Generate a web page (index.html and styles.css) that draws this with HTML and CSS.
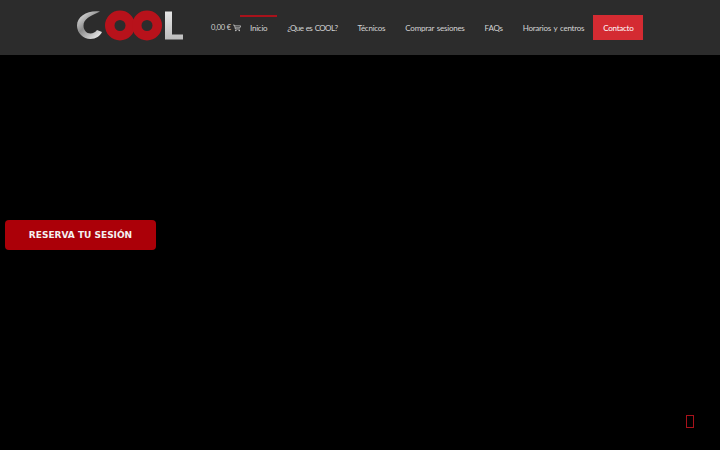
FILE: index.html
```html
<!DOCTYPE html>
<html lang="es">
<head>
<meta charset="utf-8">
<title>COOL</title>
<link rel="stylesheet" href="styles.css">
</head>
<body>
<header class="header">
  <a class="logo" href="#" aria-label="COOL">
    <svg width="108" height="36" viewBox="0 0 108 36">
      <defs>
        <linearGradient id="cg" x1="0.1" y1="0" x2="0.9" y2="1">
          <stop offset="0" stop-color="#e8e8e8"/>
          <stop offset="0.45" stop-color="#8c8c8c"/>
          <stop offset="1" stop-color="#f2f2f2"/>
        </linearGradient>
        <linearGradient id="lg" x1="0" y1="0" x2="0" y2="1">
          <stop offset="0" stop-color="#e6e6e6"/>
          <stop offset="1" stop-color="#bdbdbd"/>
        </linearGradient>
      </defs>
      <path class="logo-c" d="M24 1.5C12 0 1 6 1 15.5A13.5 13.5 0 0 0 14.5 29C20 29 24 26 26 22L21 20C19.5 22 17 23.5 14.5 23.5C10.5 23.5 7.5 20 7.5 15.5C7.5 9 14 6 24 1.5Z"/>
      <circle class="logo-o" cx="44" cy="15.5" r="10.25"/>
      <circle class="logo-o" cx="71" cy="15.5" r="10.25"/>
      <path class="logo-l" d="M89 1.5H96V24.5H107V29.5H89Z"/>
    </svg>
  </a>
  <nav class="nav">
    <a class="cart" href="#">0,00 €
      <svg class="cart-icon" width="8" height="8" viewBox="0 0 9 8">
        <path d="M0 .7H1.6L2.7 5.2H7.6M2 1.6H8.6L7.8 3.8H2.5" fill="none" stroke="#d8d8d8" stroke-width=".8"/>
        <circle cx="3.2" cy="6.9" r=".8" fill="#d8d8d8"/>
        <circle cx="7" cy="6.9" r=".8" fill="#d8d8d8"/>
      </svg>
    </a>
    <a class="link active" href="#">Inicio</a>
    <a class="link tight" href="#">¿Que es COOL?</a>
    <a class="link" href="#">Técnicos</a>
    <a class="link" href="#">Comprar sesiones</a>
    <a class="link" href="#">FAQs</a>
    <a class="link" href="#">Horarios y centros</a>
    <a class="link contact" href="#">Contacto</a>
  </nav>
</header>
<main class="hero">
  <a class="reserve" href="#">RESERVA TU SESIÓN</a>
</main>
<a class="to-top" href="#" aria-label="Subir"></a>
</body>
</html>
```
FILE: styles.css
```css
* { box-sizing: border-box; }
html, body { margin: 0; height: 100%; }
body {
  background: #000;
  font-family: "Lato", "Noto Sans", sans-serif;
  overflow: hidden;
}
a { text-decoration: none; color: inherit; }
.header {
  height: 55px;
  background: #2c2c2c;
  display: flex;
  align-items: center;
  padding-left: 76px;
}
.logo { display: flex; width: 135px; }
.logo-c { fill: url(#cg); }
.logo-o { fill: none; stroke: #b8121b; stroke-width: 9.5; }
.logo-l { fill: url(#lg); }
.nav { display: flex; align-items: center; height: 25px; }
.cart {
  display: flex;
  align-items: center;
  gap: 2px;
  width: 29px;
  white-space: nowrap;
  font-size: 7.5px;
  letter-spacing: -.2px;
  color: #cfcfcf;
}
.cart-icon { flex: none; }
.link {
  height: 25px;
  padding: 0 10px;
  display: flex;
  align-items: center;
  font-size: 8px;
  letter-spacing: -.25px;
  word-spacing: 1px;
  color: #d4d4d4;
  white-space: nowrap;
  border-top: 2px solid transparent;
  border-bottom: 2px solid transparent;
}
.tight { letter-spacing: -.6px; }
.active { border-top-color: #a8121b; }
.contact { background: #d42b32; color: #fff; margin-left: -1px; }
.hero { height: 395px; display: flex; align-items: center; padding-left: 5px; }
.reserve {
  width: 151px;
  height: 30px;
  margin-top: -35px;
  display: flex;
  align-items: center;
  justify-content: center;
  background: #ab0008;
  border-radius: 4px;
  color: #f4f0f0;
  font-family: "DejaVu Sans", sans-serif;
  font-weight: 700;
  font-size: 9px;
}
.to-top {
  position: absolute;
  left: 686px;
  top: 415px;
  width: 8px;
  height: 13px;
  border: 1px solid #a8121b;
}
```
